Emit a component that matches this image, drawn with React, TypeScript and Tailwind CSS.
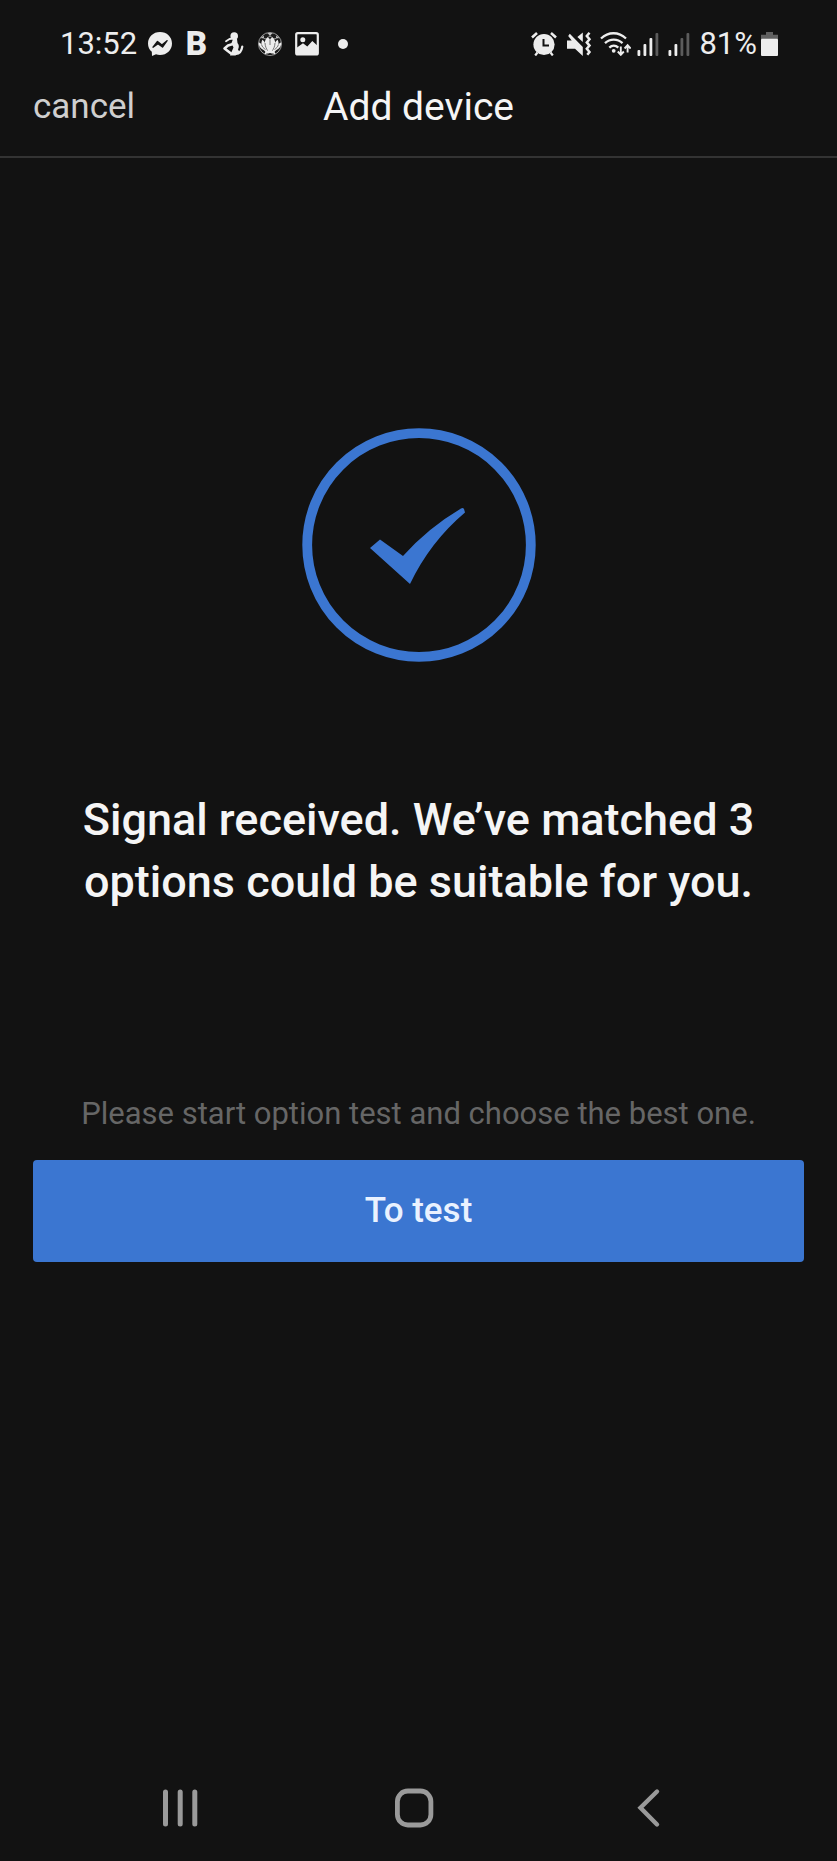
import React from 'react';

interface SignalProps {
  level: number; // Number of lit bars (0-4)
}

const SIGNAL_BARS = [
  { x: 0, y: 18 },
  { x: 6, y: 12 },
  { x: 12, y: 6 },
  { x: 18, y: 1 },
];

const SignalIcon: React.FC<SignalProps> = ({ level }) => (
  <svg className="h-6 w-[25px]" viewBox="0 0 25 24" aria-hidden="true">
    {SIGNAL_BARS.map((bar, i) => (
      <rect key={bar.x} x={bar.x + 0.5} y={bar.y} width="2.8" height={24 - bar.y} rx="1" fill={i < level ? '#ededed' : '#5c5c5c'} />
    ))}
  </svg>
);

const MessengerIcon = () => (
  <svg className="size-6" viewBox="0 0 24 24" aria-hidden="true">
    <path d="M12 0C5.2 0 0 4.9 0 11.4c0 3.5 1.4 6.3 3.8 8.4L4 23.9l4-1.6c1.2.4 2.6.6 4 .6 6.8 0 12-4.9 12-11.5S18.8 0 12 0Z" fill="#ededed" />
    <path d="m5 15.200 4.500-5.700 4.400 3.500 5.200-4.300-4.600 6.300-4.500-3.400Z" fill="#121212" stroke="#121212" strokeWidth="1.4" strokeLinejoin="round" />
  </svg>
);

const FigureIcon = () => (
  <svg className="size-6" viewBox="0 0 24 24" fill="none" stroke="#ededed" strokeLinecap="round" strokeLinejoin="round" aria-hidden="true">
    <circle cx="13.200" cy="4" r="3.800" fill="#ededed" stroke="none" />
    <path d="M12.200 6.500 8.500 7 5 9.300" strokeWidth="1.800" />
    <path d="M12 7h4l.5 4c1.700 2 1.700 4 .5 6.500l1.500 2.500-4 3.500H9l1.500-3.500 2-4.500-2-4.500Z" fill="#ededed" stroke="none" />
    <path d="m12 12-5 1.500-3.500 3L10 21.500" strokeWidth="2.600" />
    <path d="M14.500 21.800c3.500.2 6-2 6.800-7.300" strokeWidth="2.200" />
  </svg>
);

const TrophyIcon = () => (
  <svg className="h-6 w-[26px]" viewBox="0 0 26 24" aria-hidden="true">
    <circle cx="13" cy="12" r="11.500" fill="#1c1c1c" stroke="#a8a8a8" strokeWidth="0.9" />
    <path d="M10.500 1h5l-2.500 3ZM3.500 6l3.300-2.500L7 6.500ZM22.500 6l-3.300-2.500-.2 3Z" fill="#c0c0c0" />
    <path d="M13 4 9.500 6.500M13 4l3.500 2.500M7 6.500l2.500.5M19 6.500l-2.500.5" stroke="#a8a8a8" strokeWidth="0.9" />
    <path
      d="M9 21.500c-.2-2-1.500-3-3.300-4C3 16 1.500 13.500 1.800 10.500c1.300.3 2.100 1 2.700 2-.2-1.700.1-3.300 1-4.700 1.200.8 2 1.900 2.300 3.300 0-2.400.8-4.200 2.500-5.700 1.300.2 2.100.9 2.700 2.100.6-1.200 1.400-1.900 2.700-2.100 1.700 1.500 2.500 3.300 2.500 5.700.3-1.400 1.100-2.500 2.300-3.300.9 1.400 1.200 3 1 4.700.6-1 1.400-1.700 2.700-2 .3 3-1.200 5.500-3.900 7-1.800 1-3.100 2-3.300 4Z"
      fill="#ededed"
    />
    <path d="M13 7.500v5.500M8 11c.2 3.500 1.200 5.500 2.800 8M18 11c-.2 3.500-1.200 5.500-2.800 8M4.600 12.500c.5 2.300 1.700 3.500 3.900 5M21.400 12.500c-.5 2.300-1.700 3.500-3.900 5" stroke="#555" strokeWidth="0.8" fill="none" />
    <path d="M8 22c1.300-2.300 3-3.200 5-3.200s3.700.9 5 3.200" stroke="#ededed" strokeWidth="1.400" fill="none" />
    <path d="M11 23c.3-1.300 1-2 2-2s1.700.7 2 2Z" fill="#1c1c1c" />
  </svg>
);

const PictureIcon = () => (
  <svg className="size-6" viewBox="0 0 24 24" aria-hidden="true">
    <rect x="1.200" y="1.200" width="21.600" height="21.200" rx="1.500" fill="none" stroke="#ededed" strokeWidth="2.200" />
    <circle cx="7.800" cy="7.800" r="2.500" fill="#ededed" />
    <path d="M2 22v-6.500l6-4.300 4.300 3.300 5-5.500 5 4.500V22Z" fill="#ededed" />
  </svg>
);

const DotIcon = () => (
  <svg className="size-6" viewBox="0 0 24 24" aria-hidden="true">
    <circle cx="12" cy="12" r="5" fill="#ededed" />
  </svg>
);

const AlarmIcon = () => (
  <svg className="h-6 w-[30px]" viewBox="0 0 30 24" fill="none" aria-hidden="true">
    <path d="m1 5.500 5-4.400M20 1.100l5 4.400" stroke="#ededed" strokeWidth="2.600" />
    <path d="m6.500 20.500-2.300 3M19.500 20.500l2.300 3" stroke="#ededed" strokeWidth="2.200" />
    <circle cx="13" cy="12.500" r="10.600" fill="#ededed" />
    <path d="M12.500 7v6.500h5.500" stroke="#121212" strokeWidth="2" />
  </svg>
);

const MutedIcon = () => (
  <svg className="h-6 w-[27px]" viewBox="0 0 27 24" aria-hidden="true">
    <path d="M0 8.500h4.700L1.200 4l1.600-2.200 13 13.200V24L8 16.800H0Z" fill="#ededed" />
    <path d="M15.800.5v9.500L10.400 5Z" fill="#ededed" />
    <path d="m22.500.8-2.700 3.200 2.700 3.200-2.700 3.200 2.700 3.200-2.700 3.200 2.700 3.200-2.200 2.800" fill="none" stroke="#ededed" strokeWidth="2.500" />
  </svg>
);

const WifiIcon = () => (
  <svg className="h-6 w-[31px]" viewBox="0 0 31 24" fill="none" stroke="#ededed" aria-hidden="true">
    <path d="M1 6.500c7.300-7 17.700-7 25 0M5 11.200c5-4.800 12.500-4.800 17.500 0M9.300 15.600c2.700-2.600 6.300-2.600 9 0" strokeWidth="2.300" />
    <circle cx="13.700" cy="18.800" r="1.900" fill="#ededed" stroke="none" />
    <path d="M20.800 14.500v7.700M17.800 19.500l3 3.300 3-3.300M27.600 20.500v-7M24.600 16.500l3-3.300 3 3.300" strokeWidth="1.900" />
  </svg>
);

const BatteryIcon = () => (
  <svg className="h-6 w-[17px]" viewBox="0 0 17 24" aria-hidden="true">
    <path d="M5 0h7v2.700h5V7H0V2.700H5Z" fill="#606060" />
    <rect y="6.800" width="17" height="17.200" rx="1" fill="#ededed" />
  </svg>
);

const StatusBar = () => (
  <div className="flex h-16 items-end justify-between pr-[59px] pl-[60px] text-[31px] leading-10 text-[#ededed]">
    <div className="flex h-10 items-center">
      <span>13:52</span>
      <div className="ml-[11px] flex w-[207px] items-center justify-between">
        <MessengerIcon />
        <span className="w-6 text-center text-[33px] font-black">B</span>
        <FigureIcon />
        <TrophyIcon />
        <PictureIcon />
        <DotIcon />
      </div>
    </div>
    <div className="flex h-10 items-center gap-[6px]">
      <AlarmIcon />
      <MutedIcon />
      <WifiIcon />
      <SignalIcon level={3} />
      <SignalIcon level={2} />
      <div className="flex items-center gap-1">
        <span>81%</span>
        <BatteryIcon />
      </div>
    </div>
  </div>
);

const Header = () => (
  <header className="grid grid-cols-[1fr_auto_1fr] items-center border-b-2 border-[#333333] px-[33px] pt-[19px] pb-[25px]">
    <button type="button" className="justify-self-start text-[35px] leading-[48px] text-[#cfcfcf]">
      cancel
    </button>
    <h1 className="text-[39px] leading-[48px] text-[#f5f5f5]">Add device</h1>
  </header>
);

const SuccessMark = () => (
  <svg className="size-[234px]" viewBox="0 0 234 234" aria-hidden="true">
    <circle cx="117" cy="117" r="111.800" fill="none" stroke="#3b76d1" strokeWidth="9.800" />
    <path d="M68 120 78 111.500 101 128Q126 100 159 80.500Q161 79.500 162 81L163 84.500Q128 114 108 156Z" fill="#3b76d1" />
  </svg>
);

const NavBar = () => (
  <nav className="mt-auto flex justify-between pt-10 pr-[20%] pb-[33px] pl-[19%]">
    <button type="button" aria-label="Recent apps">
      <svg className="size-10" viewBox="0 0 40 40" stroke="#9a9a9a" strokeWidth="5" strokeLinecap="round">
        <path d="M6.500 4v32M21.200 4v32M35.800 4v32" />
      </svg>
    </button>
    <button type="button" aria-label="Home">
      <svg className="size-10" viewBox="0 0 40 40" fill="none" stroke="#9a9a9a" strokeWidth="4.800">
        <rect x="3.400" y="3" width="33.500" height="34" rx="10.500" />
      </svg>
    </button>
    <button type="button" aria-label="Back">
      <svg className="size-10" viewBox="0 0 40 40" fill="none" stroke="#9a9a9a" strokeWidth="4.400" strokeLinecap="round">
        <path d="M27 3.500 10.500 19.800 27 36.500" />
      </svg>
    </button>
  </nav>
);

export default function App() {
  return (
    <div className="flex min-h-screen flex-col bg-[#121212] font-['Roboto',sans-serif]">
      <StatusBar />
      <Header />
      <main className="flex flex-col items-center px-[33px] pt-[270px] text-center">
        <SuccessMark />
        <h2 className="mt-[127px] max-w-[700px] text-[45px] leading-[62px] font-medium text-[#f5f5f5]">
          Signal received. We’ve matched 3 options could be suitable for you.
        </h2>
        <p className="mt-[181px] text-[31px] leading-10 text-[#666666]">
          Please start option test and choose the best one.
        </p>
        <button type="button" className="mt-[26px] h-[102px] w-full rounded bg-[#3b76d1] text-[35px] leading-[48px] font-medium text-[#eaf2ff]">
          To test
        </button>
      </main>
      <NavBar />
    </div>
  );
}
